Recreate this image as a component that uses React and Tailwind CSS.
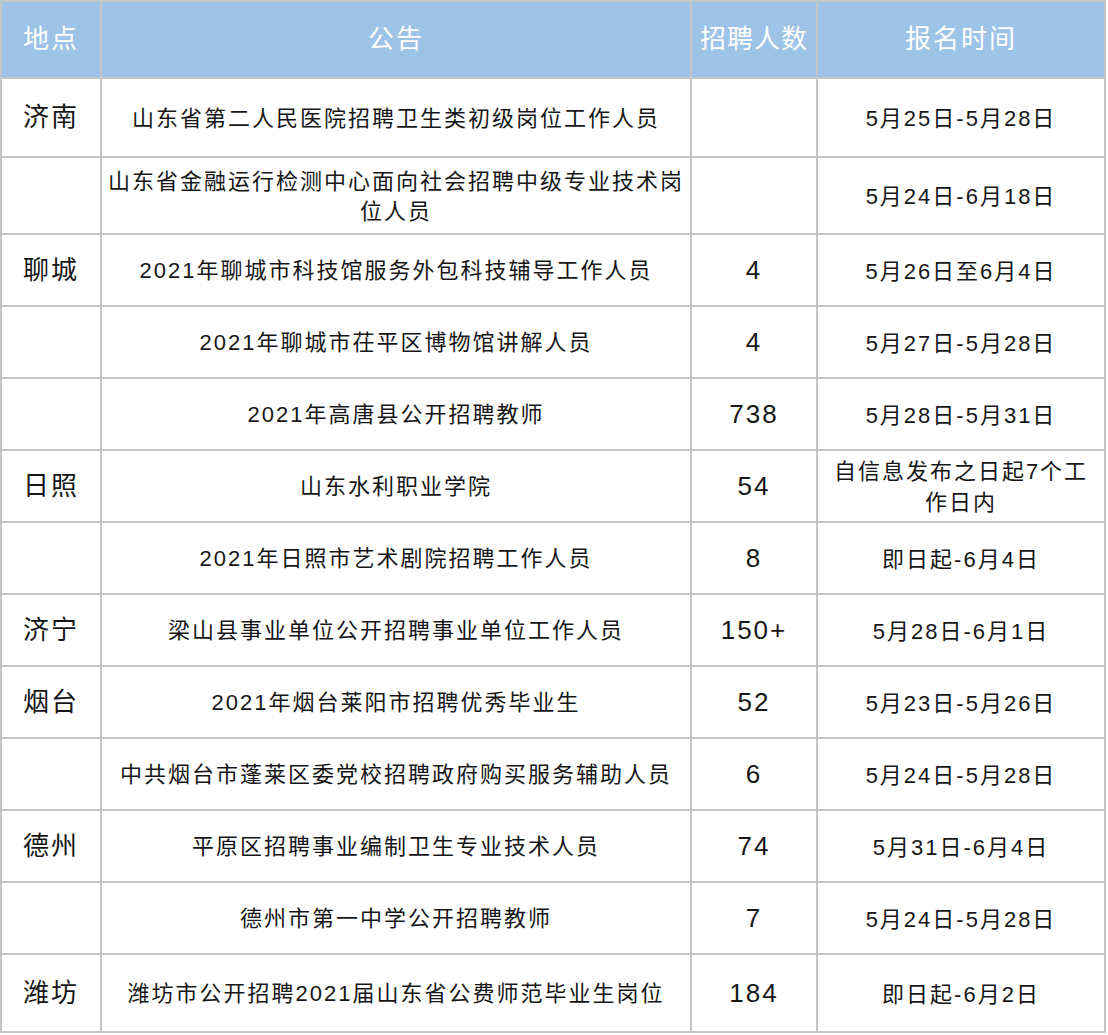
const rows = [
  { city: "济南", title: "山东省第二人民医院招聘卫生类初级岗位工作人员", num: "", time: "5月25日-5月28日", h: "h-[77px]" },
  { city: "", title: "山东省金融运行检测中心面向社会招聘中级专业技术岗位人员", num: "", time: "5月24日-6月18日", h: "h-[75px]" },
  { city: "聊城", title: "2021年聊城市科技馆服务外包科技辅导工作人员", num: "4", time: "5月26日至6月4日", h: "h-[70px]" },
  { city: "", title: "2021年聊城市茌平区博物馆讲解人员", num: "4", time: "5月27日-5月28日", h: "h-[70px]" },
  { city: "", title: "2021年高唐县公开招聘教师", num: "738", time: "5月28日-5月31日", h: "h-[70px]" },
  { city: "日照", title: "山东水利职业学院", num: "54", time: "自信息发布之日起7个工作日内", h: "h-[70px]" },
  { city: "", title: "2021年日照市艺术剧院招聘工作人员", num: "8", time: "即日起-6月4日", h: "h-[70px]" },
  { city: "济宁", title: "梁山县事业单位公开招聘事业单位工作人员", num: "150+", time: "5月28日-6月1日", h: "h-[70px]" },
  { city: "烟台", title: "2021年烟台莱阳市招聘优秀毕业生", num: "52", time: "5月23日-5月26日", h: "h-[70px]" },
  { city: "", title: "中共烟台市蓬莱区委党校招聘政府购买服务辅助人员", num: "6", time: "5月24日-5月28日", h: "h-[70px]" },
  { city: "德州", title: "平原区招聘事业编制卫生专业技术人员", num: "74", time: "5月31日-6月4日", h: "h-[70px]" },
  { city: "", title: "德州市第一中学公开招聘教师", num: "7", time: "5月24日-5月28日", h: "h-[70px]" },
  { city: "潍坊", title: "潍坊市公开招聘2021届山东省公费师范毕业生岗位", num: "184", time: "即日起-6月2日", h: "h-[76px]" },
];

const font = { fontFamily: '"Liberation Sans", "Noto Sans CJK SC", sans-serif' };

export default function App() {
  return (
    <div className="min-h-[1035px] bg-white" style={font}>
      <div className="grid w-fit grid-cols-[98px_588px_124px_286px] gap-[2px] bg-[#c6c6c6] p-[2px]">
        {/* Header */}
        <div className="flex h-[75px] items-center justify-center bg-[#9dc3e6] text-[26px] tracking-[2px] text-white">地点</div>
        <div className="flex h-[75px] items-center justify-center bg-[#9dc3e6] text-[26px] tracking-[2px] text-white">公告</div>
        <div className="flex h-[75px] items-center justify-center bg-[#9dc3e6] text-[26px] tracking-[1px] text-white">招聘人数</div>
        <div className="flex h-[75px] items-center justify-center bg-[#9dc3e6] text-[26px] tracking-[2px] text-white">报名时间</div>

        {rows.map((r, i) => (
          <div key={i} className="contents">
            <div className={`flex items-center justify-center bg-white text-[26px] tracking-[2px] text-[#161616] ${r.h}`}>
              {r.city}
            </div>
            <div className={`flex items-center justify-center bg-white px-[4px] pt-[2px] text-center text-[22px] leading-[30px] tracking-[2px] text-[#161616] ${r.h}`}>
              {r.title}
            </div>
            <div className={`flex items-center justify-center bg-white text-[26px] tracking-[2px] text-[#161616] ${r.h}`}>
              {r.num}
            </div>
            <div className={`flex items-center justify-center bg-white px-[12px] pt-[2px] text-center text-[22px] leading-[31px] tracking-[2px] text-[#161616] ${r.h}`}>
              {r.time}
            </div>
          </div>
        ))}
      </div>
    </div>
  );
}
